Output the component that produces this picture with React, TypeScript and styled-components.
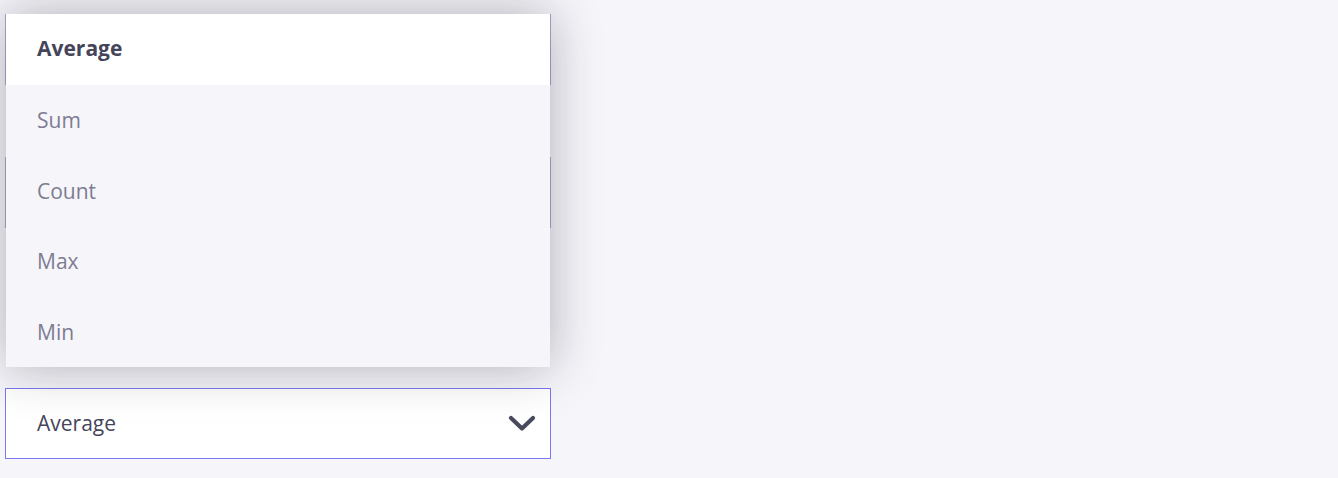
import React from 'react'
import styled, { createGlobalStyle, css } from 'styled-components'

const GlobalStyle = createGlobalStyle`
  html, body {
    margin: 0;
    padding: 0;
    background: #f5f5fa;
    font-family: 'Open Sans', 'Noto Sans', sans-serif;
  }
`

const Page = styled.div`
  width: 1338px;
  height: 478px;
  padding: 14px 0 0 5px;
  box-sizing: border-box;
  overflow: hidden;
`

const Form = styled.div`
  width: 546px;
  display: flex;
  flex-direction: column;
`

const Field = styled.div<{ $gap: number }>`
  position: relative;
  margin-top: ${({ $gap }) => $gap}px;
  height: 71px;
  box-sizing: border-box;
  border: 1px solid #aba8cc;
  background: #ffffff;
`

const SelectBox = styled.div<{ $open?: boolean }>`
  position: relative;
  height: 71px;
  box-sizing: border-box;
  border: 1px solid ${({ $open }) => ($open ? '#7b78f0' : '#aba8cc')};
  background: #ffffff;
  display: flex;
  align-items: center;
  justify-content: space-between;
  padding: 0 13px 0 31px;
`

const Value = styled.span`
  font-size: 21px;
  color: #45455a;
  margin-top: -2px;
`

const Menu = styled.ul`
  position: absolute;
  left: 0;
  right: 0;
  bottom: calc(100% + 22px);
  margin: 0;
  padding: 0;
  list-style: none;
  background: #f5f5fa;
  box-shadow: 0 0 48px rgba(30, 30, 45, 0.32);
  z-index: 2;
`

const Option = styled.li<{ $selected?: boolean }>`
  height: 70.6px;
  display: flex;
  align-items: center;
  padding-left: 31px;
  font-size: 21px;
  color: #7e7c92;
  ${({ $selected }) =>
    $selected &&
    css`
      background: #ffffff;
      color: #45455a;
      font-weight: 700;
      padding-bottom: 3px;
      box-sizing: border-box;
    `}
`

const Chevron = () => (
  <svg width="30" height="20" viewBox="0 0 30 20" fill="none">
    <path d="M4 4 L15 14.5 L26 4" stroke="#4a4a5e" strokeWidth="4.2" strokeLinecap="round" strokeLinejoin="round" />
  </svg>
)

const options = ['Average', 'Sum', 'Count', 'Max', 'Min']

export default function App() {
  const selected = 'Average'
  return (
    <>
      <GlobalStyle />
      <Page>
        <Form>
          <Field $gap={0} />
          <Field $gap={72} />
          <SelectBox $open style={{ marginTop: 160 }}>
            <Value>{selected}</Value>
            <Chevron />
            <Menu>
              {options.map((o) => (
                <Option key={o} $selected={o === selected}>
                  {o}
                </Option>
              ))}
            </Menu>
          </SelectBox>
        </Form>
      </Page>
    </>
  )
}
